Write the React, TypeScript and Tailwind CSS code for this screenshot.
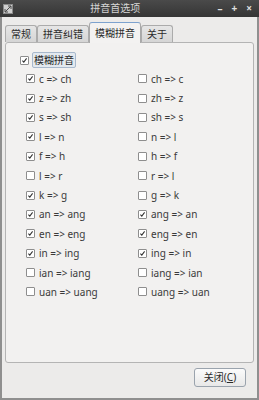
import React from "react";

const font = { fontFamily: '"Noto Sans", "Noto Sans CJK SC", sans-serif' };

const rows: [string, boolean, string, boolean][] = [
  ["c => ch", true, "ch => c", false],
  ["z => zh", true, "zh => z", false],
  ["s => sh", true, "sh => s", false],
  ["l => n", true, "n => l", false],
  ["f => h", true, "h => f", false],
  ["l => r", false, "r => l", false],
  ["k => g", true, "g => k", false],
  ["an => ang", true, "ang => an", true],
  ["en => eng", true, "eng => en", true],
  ["in => ing", true, "ing => in", true],
  ["ian => iang", false, "iang => ian", false],
  ["uan => uang", false, "uang => uan", false],
];

function Box({ checked }: { checked: boolean }) {
  return (
    <span className="flex h-[9px] w-[9px] shrink-0 items-center justify-center rounded-[1px] border border-[#8e8e8e] bg-white">
      {checked && (
        <svg viewBox="0 0 9 9" className="h-[9px] w-[9px]" aria-hidden="true">
          <path d="M1.8 4.6 L3.6 6.6 L7.2 1.8" fill="none" stroke="#2e2e2e" strokeWidth="1.3" />
        </svg>
      )}
    </span>
  );
}

function Check({ label, checked }: { label: string; checked: boolean }) {
  return (
    <div className="flex items-center gap-[4px]">
      <Box checked={checked} />
      <span className="whitespace-pre text-[10px] leading-none text-[#3a3a3a]">{label}</span>
    </div>
  );
}

function Tab({ label, active }: { label: string; active?: boolean }) {
  return active ? (
    <div className="relative z-10 -mb-px flex h-[21px] items-center rounded-t-[3px] border border-b-0 border-[#a9a9a9] border-t-[#7da2ce] bg-[#f3f2f1] px-[5px] text-[10px] text-[#2b2b2b]">
      {label}
    </div>
  ) : (
    <div className="mt-[3px] flex h-[17px] items-center rounded-t-[3px] border border-b-0 border-[#ababab] bg-gradient-to-b from-[#e6e6e6] to-[#d5d5d5] px-[5px] text-[10px] text-[#2b2b2b]">
      {label}
    </div>
  );
}

export default function App() {
  return (
    <div style={font} className="flex h-[400px] w-[259px] flex-col overflow-hidden bg-[#ecebea]">
      <div className="flex h-[17px] shrink-0 items-center bg-gradient-to-b from-[#4a4a4a] to-[#353535] px-[3px]">
        <svg viewBox="0 0 10 10" className="h-[10px] w-[10px]" aria-hidden="true">
          <rect x="0.5" y="0.5" width="9" height="9" fill="#cfcfcf" stroke="#8a8a8a" />
          <path d="M2 8 L8 2 M5 2 H8 V5 M2 5 V8 H5" stroke="#4a4a4a" strokeWidth="1" fill="none" />
        </svg>
        <div className="flex-1 text-center text-[10px] text-[#d6d6d6]">拼音首选项</div>
        <div className="flex items-center gap-[9px] pr-[4px] text-[10px] font-bold text-[#e0e0e0]">
          <span>–</span>
          <span>+</span>
          <span>×</span>
        </div>
      </div>

      <div className="flex flex-1 flex-col border-x-2 border-b-2 border-[#8f8f8f] px-[3px]">
        <div className="mt-[5px] flex items-start">
          <Tab label="常规" />
          <Tab label="拼音纠错" />
          <Tab label="模糊拼音" active />
          <Tab label="关于" />
        </div>

        <div className="h-[321px] rounded-[3px] border border-[#b4b4b4] bg-[#f2f1f0] pl-[14px] pt-[9px]">
          <div className="flex items-center gap-[3px]">
            <Box checked />
            <span className="flex h-[16px] items-center rounded-[2px] border border-[#a7b8cc] bg-[#e3e9ef] px-[1px] text-[10px] text-[#2b2b2b]">
              模糊拼音
            </span>
          </div>
          <div className="mt-[1px] grid grid-cols-[112px_1fr] pl-[6px]">
            {rows.map(([a, ca, b, cb], i) => (
              <React.Fragment key={i}>
                <div className="flex h-[19.4px] items-center">
                  <Check label={a} checked={ca} />
                </div>
                <div className="flex h-[19.4px] items-center">
                  <Check label={b} checked={cb} />
                </div>
              </React.Fragment>
            ))}
          </div>
        </div>

        <div className="flex flex-1 items-start justify-end pr-[8px] pt-[5px]">
          <button className="flex h-[19px] w-[52px] items-center justify-center rounded-[3px] border border-[#9aa3ad] bg-gradient-to-b from-[#fbfbfb] to-[#e8e8e8] text-[10px] text-[#2b2b2b]">
            关闭(<span className="underline">C</span>)
          </button>
        </div>
      </div>
    </div>
  );
}
